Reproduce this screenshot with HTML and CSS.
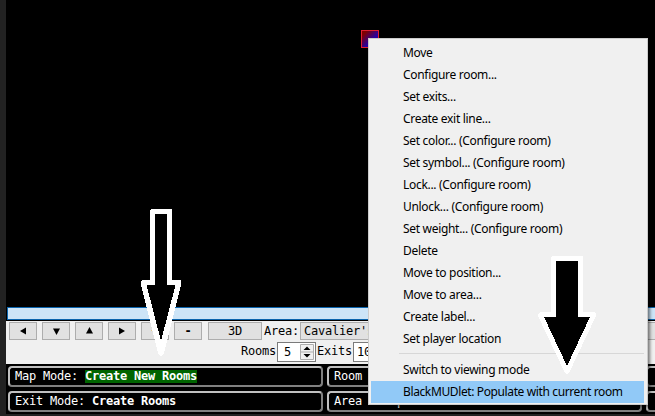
FILE: index.html
```html
<!DOCTYPE html>
<html lang="en">
<head>
<meta charset="utf-8">
<title>Mapper</title>
<link rel="stylesheet" href="styles.css">
</head>
<body>
<div class="window">
  <main class="mapper">
    <div class="map"><div class="room"></div></div>
    <div class="handle"></div>
    <div class="controls">
      <div class="row">
        <button class="btn"><svg width="10" height="10"><path d="M8 1.500v7L2 5z"/></svg></button>
        <button class="btn"><svg width="10" height="10"><path d="M2 2.500h7L5.500 9z"/></svg></button>
        <button class="btn"><svg width="10" height="10"><path d="M2 7.500h7L5.500 1z"/></svg></button>
        <button class="btn"><svg width="10" height="10"><path d="M2 1.500v7L8 5z"/></svg></button>
        <button class="btn">+</button>
        <button class="btn bold">-</button>
        <button class="btn wide">3D</button>
        <span class="area-label">Area:</span>
        <div class="select">Cavalier's</div>
      </div>
      <div class="row second">
        <span class="rooms-label">Rooms</span>
        <div class="spin"><span>5</span>
          <svg width="14" height="16"><path class="frame" d="M.5.5h13v15H.5zM0 8h14"/><path d="M3.500 6L7 2.500 10.500 6zM3.500 10h7L7 13.500z"/></svg>
        </div>
        <span class="exits-label">Exits</span>
        <div class="spin"><span class="ten">10</span></div>
      </div>
    </div>
    <div class="status">
      <div class="card">Map Mode: <b class="active">Create New Rooms</b></div>
      <div class="card">Room</div>
      <div class="card"></div>
      <div class="card">Exit Mode: <b>Create Rooms</b></div>
      <div class="card">Area     p</div>
      <div class="card"></div>
    </div>
  </main>
</div>
<ul class="menu">
  <li>Move</li>
  <li>Configure room...</li>
  <li>Set exits...</li>
  <li>Create exit line...</li>
  <li>Set color... (Configure room)</li>
  <li>Set symbol... (Configure room)</li>
  <li>Lock... (Configure room)</li>
  <li>Unlock... (Configure room)</li>
  <li>Set weight... (Configure room)</li>
  <li>Delete</li>
  <li>Move to position...</li>
  <li>Move to area...</li>
  <li>Create label...</li>
  <li>Set player location</li>
  <li class="separator"></li>
  <li>Switch to viewing mode</li>
  <li class="selected">BlackMUDlet: Populate with current room</li>
</ul>
<svg class="arrows" width="655" height="416" shape-rendering="crispEdges">
  <path class="outer" d="M151 209h20l1 1v70h8l1 1v4l-17 68-2 3h-2l-2-3-17-68v-4l1-1h8v-70z"/>
  <path d="M155 214h12v71h8.500L161 341l-14.500-56h8.500z"/>
  <path class="outer" d="M552 256h30l1 1v55h11l2 2v2l-27 57-2 1-2-1-27-57v-2l2-2h11v-55z"/>
  <path d="M556 261h22v56h12L567 366l-23-49h12z"/>
</svg>
</body>
</html>
```
FILE: styles.css
```css
* { box-sizing: border-box; }
body {
  margin: 0;
  position: relative;
  width: 655px;
  height: 416px;
  overflow: hidden;
  background: #222;
  font: 12px/16px "DejaVu Sans Mono", monospace;
  letter-spacing: -0.224px;
  color: #000;
}
.window { height: 416px; padding: 0 0 2px 6px; }
.mapper { height: 414px; background: #000; overflow: hidden; }
.map { height: 307px; padding: 30px 0 0 355px; }
.room {
  width: 18px;
  height: 18px;
  border: 1px solid #e02032;
  background: linear-gradient(135deg, #800000 15%, #2800a0 60%);
}
.handle { height: 13px; margin-left: 1px; border: 1px solid #0a64ad; border-right: 0; background: #cce4f7; }
.controls { height: 43px; margin-top: 1px; padding: 1px 0 0 3px; background: #f0f0f0; }
.row { display: flex; }
.btn {
  flex: none;
  display: flex;
  align-items: center;
  justify-content: center;
  width: 28px;
  height: 18px;
  margin-right: 5px;
  padding: 0;
  border: 1px solid #adadad;
  background: #e1e1e1;
  color: #000;
  font: inherit;
  letter-spacing: inherit;
}
.bold { font-weight: bold; margin-right: 6px; }
.wide { width: 54px; margin-right: 2px; }
.area-label { width: 36px; padding-top: 1px; }
.select { flex: 1; height: 18px; padding-left: 3px; border: 1px solid #adadad; border-right: 0; background: #e1e1e1; line-height: 17px; }
.second { margin-top: 1px; padding-left: 232px; height: 22px; line-height: 20px; }
.rooms-label { width: 36px; }
.exits-label { width: 37px; padding-left: 1px; }
.spin {
  display: flex;
  justify-content: space-between;
  align-items: center;
  width: 39px;
  height: 20px;
  margin-top: 1px;
  padding: 0 1px 0 6px;
  border: 1px solid #7a7a7a;
  background: #fff;
  line-height: 18px;
}
.spin .ten { margin-left: -3px; }
.frame { fill: #f0f0f0; stroke: #adadad; }
.status {
  display: grid;
  grid-template-columns: 315px 315px 315px;
  grid-template-rows: 21px 21px;
  gap: 4px;
  padding: 2px 0 0 2px;
}
.card {
  padding: 0 5px;
  border: 2px solid;
  border-color: #c0c0c0 #808080 #808080 #c0c0c0;
  border-radius: 4px;
  color: #fff;
  line-height: 17px;
  white-space: pre;
}
.active { display: inline-block; height: 13px; margin-top: 2px; line-height: 13px; background: #006400; vertical-align: top; }
.menu {
  position: absolute;
  left: 368px;
  top: 38px;
  width: 280px;
  height: 367px;
  margin: 0;
  padding: 3px 3px 0 2px;
  border: 1px solid #ccc;
  background: #f0f0f0;
  box-shadow: 4px 4px 3px -2px rgba(0, 0, 0, .5);
  list-style: none;
  font: 12px/22px "Noto Sans", sans-serif;
  letter-spacing: -0.31px;
}
.menu li { height: 22px; padding-left: 32px; white-space: nowrap; }
.menu .separator { height: 1px; margin: 3px 0 5px 28px; padding: 0; background: #d7d7d7; }
.menu .selected { background: #91c9f7; letter-spacing: -0.38px; }
.arrows { position: absolute; left: 0; top: 0; pointer-events: none; }
.outer { fill: #fff; }
```
